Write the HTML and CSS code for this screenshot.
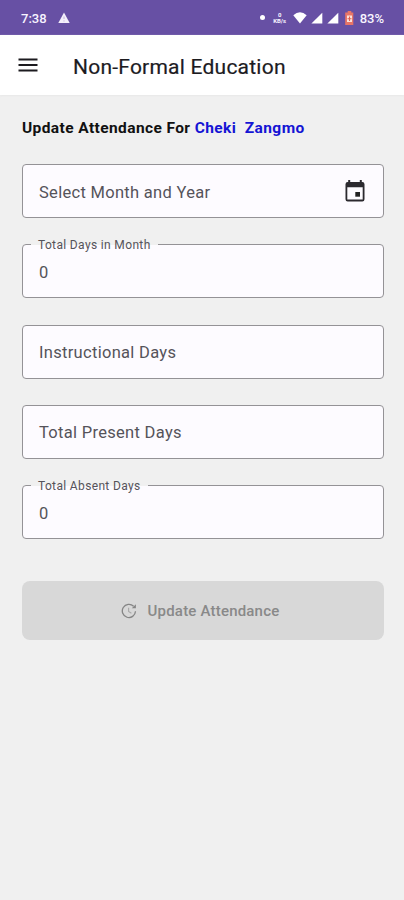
FILE: index.html
```html
<!DOCTYPE html>
<html lang="en">
<head>
<meta charset="utf-8">
<meta name="viewport" content="width=device-width, initial-scale=1">
<title>Non-Formal Education</title>
<link rel="stylesheet" href="styles.css">
</head>
<body>
<div class="status">
  <span class="time">7:38</span>
  <svg class="warn" width="12" height="12" viewBox="0 0 12 12"><path d="M6 .5 11.7 11H.3z" fill="#f4effb"/><path d="M6 4.500v2.500M6 8.400v1.100" stroke="#b9acd6" stroke-width=".9"/></svg>
  <span class="dot"></span>
  <span class="rate"><span>0</span><span>KB/s</span></span>
  <svg class="wifi" width="14" height="12" viewBox="0 0 14 12"><path d="M.3 3.200Q7-2.600 13.700 3.200L7 11.600z" fill="#fff"/></svg>
  <svg class="signal" width="12" height="12" viewBox="0 0 12 12"><path d="M11.300.7v10.800H.4z" fill="#fff"/></svg>
  <svg class="signal" width="12" height="12" viewBox="0 0 12 12"><path d="M11.300.7v10.800H.4z" fill="#fff"/></svg>
  <svg class="battery" width="9" height="14" viewBox="0 0 9 14"><path d="M2.700 0h3.600v1.500h2V14H.2V1.500h2.500z" fill="#e87567"/><path d="M2 4.500h5v6.500H2z" fill="#fbe3dd"/><path d="M4.500 5.500v4.500M2.500 7.700h4" stroke="#e0604e" stroke-width="1.100"/></svg>
  <span class="percent">83%</span>
</div>
<header class="appbar">
  <svg class="menu" width="20" height="14" viewBox="0 0 20 14"><path d="M.5 1.500h19M.5 7h19M.5 12.500h19" stroke="#1c1b1f" stroke-width="1.900"/></svg>
  <h1>Non-Formal Education</h1>
</header>
<main>
  <h2>Update Attendance For <span class="name">Cheki&nbsp; Zangmo</span></h2>
  <div class="fields">
    <div class="field">
      <span class="hint">Select Month and Year</span>
      <svg class="calendar" width="20" height="22" viewBox="0 0 20 22"><path d="M3.200 0h2v2h9.600V0h2v2h.5a2.200 2.200 0 0 1 2.200 2.200v15a2.200 2.200 0 0 1-2.200 2.200H2.700a2.200 2.200 0 0 1-2.200-2.200v-15A2.200 2.200 0 0 1 2.700 2h.5zM2.300 7.300v12.300h15.400V7.300z" fill="#2b292e" fill-rule="evenodd"/><path d="M10.300 12h4.700v4.700h-4.700z" fill="#222"/></svg>
    </div>
    <div class="field"><span class="label">Total Days in Month</span><span class="value">0</span></div>
    <div class="field"><span class="hint">Instructional Days</span></div>
    <div class="field"><span class="hint">Total Present Days</span></div>
    <div class="field"><span class="label">Total Absent Days</span><span class="value">0</span></div>
  </div>
  <button class="update" disabled>
    <svg width="16" height="16" viewBox="0 0 16 16" fill="none" stroke="#858585" stroke-width="1.300"><path d="M14.500 8.300A6.600 6.600 0 1 1 12.600 3.300"/><path d="M10.800 5.300h4.100V1.300z" fill="#858585" stroke="none"/><path d="M7.600 4.800v3.700l2.800 1.700" stroke="#a8a8a8" stroke-width="1.100"/></svg>
    <span>Update Attendance</span>
  </button>
</main>
</body>
</html>
```
FILE: styles.css
```css
* { box-sizing: border-box; }
body {
  margin: 0;
  height: 900px;
  background: #f0f0f0;
  font-family: Roboto, "Liberation Sans", sans-serif;
  color: #1c1b1f;
  overflow: hidden;
}
svg { display: block; flex: none; }
.status {
  height: 35px;
  padding: 1px 20px 0 21px;
  display: flex;
  align-items: center;
  background: #6750a4;
  color: #f8f4ff;
  white-space: nowrap;
}
.time { width: 37px; font-size: 13px; font-weight: 500; }
.dot { width: 5px; height: 5px; margin: -2px 8px 0 auto; border-radius: 50%; background: #fff; }
.rate {
  width: 14px;
  display: flex;
  flex-direction: column;
  align-items: center;
  font-size: 6px;
  font-weight: 700;
  line-height: 6px;
}
.wifi { margin-left: 6px; }
.signal { margin-left: 4px; }
.battery { margin: 0 6px; }
.percent { font-size: 13px; font-weight: 500; }
.appbar {
  height: 60px;
  padding: 3px 19px 0 18px;
  display: flex;
  align-items: center;
  background: #fff;
  box-shadow: 0 1px 2px #e8e8e8;
}
.menu { margin-top: -3px; }
h1 { margin: 0 0 0 35px; font-size: 21px; line-height: 28px; font-weight: 400; letter-spacing: .23px; -webkit-text-stroke: .2px; }
main { padding: 22px 20px 0 22px; }
h2 { margin: 0; color: #111; font-size: 15.500px; line-height: 22px; font-weight: 700; letter-spacing: .4px; white-space: nowrap; }
.name { color: #1414d4; }
.fields { margin-top: 25px; display: grid; grid-auto-rows: 54px; row-gap: 26.300px; }
.field {
  position: relative;
  padding: 3px 18px 0 16px;
  display: flex;
  align-items: center;
  justify-content: space-between;
  border: 1px solid #949296;
  border-radius: 4px;
  background: #fdfbff;
  color: #55535a;
}
.hint, .value { font-size: 16.500px; line-height: 22px; letter-spacing: .3px; }
.value { margin-top: 1px; }
.calendar { margin-top: -4px; }
.label {
  position: absolute;
  top: -7px;
  left: 8px;
  padding: 0 7px;
  background: linear-gradient(#f0f0f0 7px, #fdfbff 7px);
  font-size: 12px;
  line-height: 15px;
  letter-spacing: .35px;
}
.update {
  width: 100%;
  height: 59px;
  margin-top: 42px;
  padding: 1px 6px 0 0;
  display: flex;
  align-items: center;
  justify-content: center;
  gap: 11px;
  border: 0;
  border-radius: 8px;
  background: #d8d8d8;
  color: #898989;
  font: 500 15px Roboto, sans-serif;
  letter-spacing: .2px;
}
```
